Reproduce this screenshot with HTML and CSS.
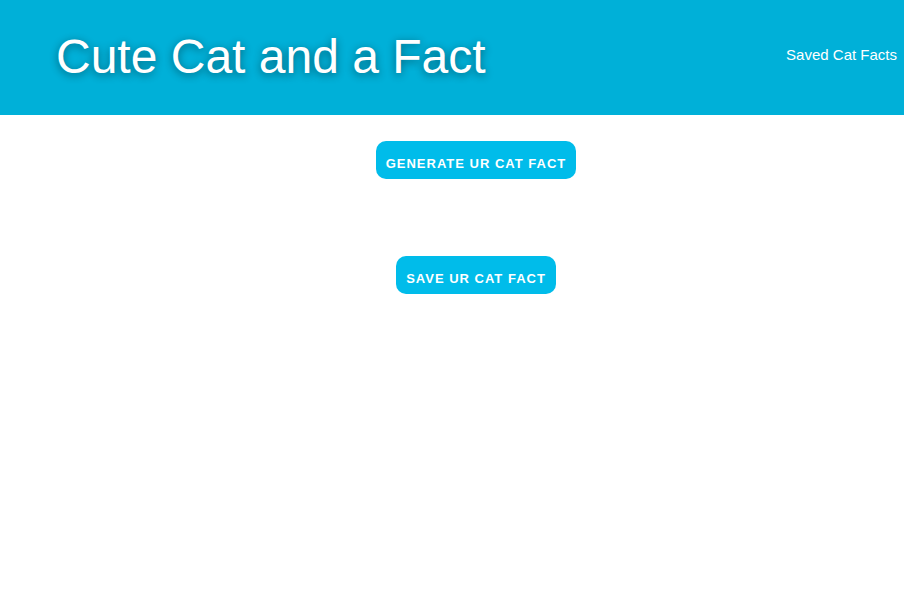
FILE: index.html
```html
<!DOCTYPE html>
<html>
<head>
<meta charset="utf-8">
<title>Cute Cat and a Fact</title>
<link rel="stylesheet" href="styles.css">
</head>
<body>
<header class="site-header">
  <h1 class="title">Cute Cat and a Fact</h1>
  <nav class="nav"><a class="nav-link" href="#">Saved Cat Facts</a></nav>
</header>
<main class="main">
  <button class="btn">GENERATE UR CAT FACT</button>
  <div class="fact-area"></div>
  <button class="btn">SAVE UR CAT FACT</button>
</main>
</body>
</html>
```

FILE: styles.css
```css
html, body {
  margin: 0;
  padding: 0;
  background: #ffffff;
  font-family: "Liberation Sans", Arial, Helvetica, sans-serif;
}

.site-header {
  height: 115px;
  background: #00b0d8;
  display: flex;
  align-items: center;
  justify-content: space-between;
  padding: 0 7px 0 56px;
  box-sizing: border-box;
}

.title {
  margin: 0;
  font-size: 48px;
  font-weight: normal;
  color: #ffffff;
  text-shadow: 0 2px 8px rgba(0, 0, 0, 0.45);
  line-height: 1;
  position: relative;
  top: -1px;
}

.nav-link {
  color: #ffffff;
  text-decoration: none;
  font-size: 15px;
  position: relative;
  top: -3px;
}

.main {
  display: flex;
  flex-direction: column;
  align-items: center;
  padding: 26px 0 0 48px;
}

.btn {
  background: #00bcea;
  color: #ffffff;
  border: none;
  border-radius: 10px;
  height: 38px;
  padding: 6px 10px 0;
  font-family: "Liberation Sans", Arial, Helvetica, sans-serif;
  font-weight: bold;
  font-size: 13px;
  letter-spacing: 1px;
  cursor: pointer;
}

.fact-area {
  height: 77px;
}
```
